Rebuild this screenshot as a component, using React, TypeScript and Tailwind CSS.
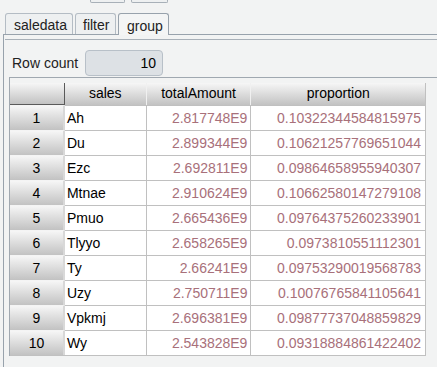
import React from 'react';

const rows = [
  { sales: 'Ah', total: '2.817748E9', prop: '0.10322344584815975' },
  { sales: 'Du', total: '2.899344E9', prop: '0.10621257769651044' },
  { sales: 'Ezc', total: '2.692811E9', prop: '0.09864658955940307' },
  { sales: 'Mtnae', total: '2.910624E9', prop: '0.10662580147279108' },
  { sales: 'Pmuo', total: '2.665436E9', prop: '0.09764375260233901' },
  { sales: 'Tlyyo', total: '2.658265E9', prop: '0.0973810551112301' },
  { sales: 'Ty', total: '2.66241E9', prop: '0.09753290019568783' },
  { sales: 'Uzy', total: '2.750711E9', prop: '0.10076765841105641' },
  { sales: 'Vpkmj', total: '2.696381E9', prop: '0.09877737048859829' },
  { sales: 'Wy', total: '2.543828E9', prop: '0.09318884861422402' },
];

const headGrad = 'bg-gradient-to-b from-[#f6f6f6] via-[#dcdcdc] to-[#c2c2c2]';

export default function App() {
  return (
    <div
      className="w-[437px] h-[367px] overflow-hidden bg-[#f2f3f3] text-[14px] text-black"
      style={{ fontFamily: '"Liberation Sans", Arial, sans-serif' }}
    >
      {/* toolbar buttons cut off at the top */}
      <div className="flex h-[3px] pl-[90px] gap-[6px]">
        <div className="w-[35px] h-[3px] border-x border-b border-[#a8b0b8] rounded-b-[2px] bg-[#eef0f1]" />
        <div className="w-[37px] h-[3px] border-x border-b border-[#a8b0b8] rounded-b-[2px] bg-[#eef0f1]" />
      </div>

      {/* tabs */}
      <div className="flex items-end gap-[2px] pl-[5px] mt-[9px] h-[22px]">
        <div className="w-[68px] h-[21px] border border-b-0 border-[#b4bcc4] rounded-t-[3px] bg-[#eef0f1] pl-[8px] leading-[22px] text-[#222]">
          saledata
        </div>
        <div className="w-[41px] h-[21px] border border-b-0 border-[#b4bcc4] rounded-t-[3px] bg-[#eef0f1] pl-[7px] leading-[22px] text-[#222]">
          filter
        </div>
        <div className="w-[51px] h-[22px] border border-b-0 border-[#98a2ac] rounded-t-[3px] bg-[#f4f5f5] pl-[8px] leading-[24px] text-[#222] relative z-10 -mb-[1px]">
          group
        </div>
      </div>

      {/* tab panel */}
      <div className="ml-[3px] border-t border-l border-[#98a2ac] h-[333px]">
        <div className="mt-[4px] ml-[1px] border-t border-[#a8b0b8] pt-[10px]">
          <div className="flex items-center h-[26px]">
            <span className="ml-[7px] w-[73px] text-[#222]">Row count</span>
            <div className="w-[78px] h-[26px] rounded-[4px] border border-[#b8c0c8] bg-[#dde1e5] text-right pr-[6px] leading-[24px]">
              10
            </div>
          </div>

          {/* scroll pane */}
          <div className="ml-[4px] mt-[1px] border-t border-l border-[#a0a8b0] pt-[5px]">
            <div className="w-[416px] border-r border-b border-[#c0c0c0]">
              {/* header */}
              <div className="flex h-[22px]">
                <div className={`w-[55px] ${headGrad} border-r border-b border-[#5a5a5a]`} />
                <div className={`w-[82px] ${headGrad} border-r border-[#f0f0f0] text-center leading-[21px]`}>sales</div>
                <div className={`w-[105px] ${headGrad} border-r border-[#f0f0f0] text-center leading-[21px]`}>totalAmount</div>
                <div className={`w-[174px] ${headGrad} text-center leading-[21px]`}>proportion</div>
              </div>
              {rows.map((r, i) => (
                <div key={r.sales} className="flex h-[25px]">
                  <div className={`w-[55px] ${headGrad} border-t border-[#f4f4f4] border-r-2 border-r-[#d8d8d8] text-center leading-[24px]`}>
                    {i + 1}
                  </div>
                  <div className="w-[82px] bg-white border-t border-r border-[#c0c0c0] pl-[2px] leading-[24px]">{r.sales}</div>
                  <div className="w-[105px] bg-white border-t border-r border-[#c0c0c0] text-right pr-[3px] leading-[24px] text-[#a8707a]">
                    {r.total}
                  </div>
                  <div className="w-[174px] bg-white border-t border-[#c0c0c0] text-right pr-[4px] leading-[24px] text-[#a8707a]">
                    {r.prop}
                  </div>
                </div>
              ))}
            </div>
          </div>
        </div>
      </div>
    </div>
  );
}
